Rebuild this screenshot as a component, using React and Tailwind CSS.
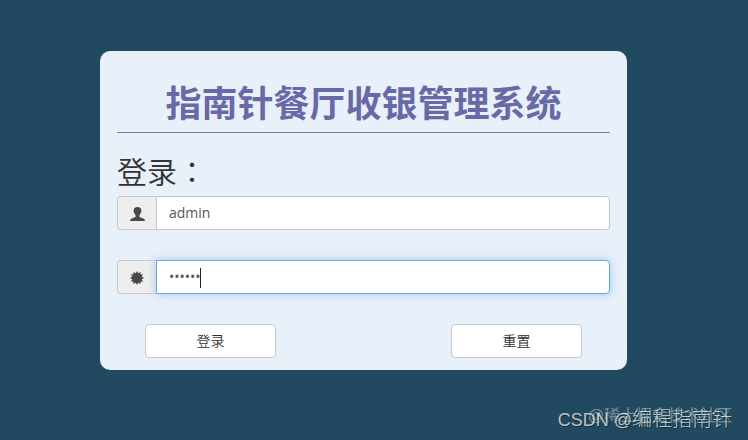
import { useState } from 'react'

function UserIcon() {
  return (
    <svg width="15" height="14" viewBox="0 0 15 14" fill="currentColor" aria-hidden="true">
      <path d="M7.500 0C5 0 3.700 1.400 3.700 3.500c0 .5 0 .7-.2 1 .1.900.5 1.300.9 1.500.2 1.100.7 1.900 1.300 2.400v1.200c-.4 1-3.300 1.300-4.700 2.400C.3 12.500 0 13.200 0 14h15c0-.8-.3-1.500-.9-2-1.400-1.100-4.400-1.400-4.800-2.400V8.400c.6-.5 1.100-1.300 1.300-2.400.4-.2.8-.6.9-1.500-.2-.3-.2-.5-.2-1C11.300 1.400 10 0 7.500 0z" />
    </svg>
  )
}

function BurstIcon() {
  return (
    <svg width="14" height="14" viewBox="0 0 14 14" fill="currentColor" aria-hidden="true">
      <path d="M7 0l1.200 2.300L10.500.9l.1 2.500 2.500-.1-1.400 2.300L14 7l-2.300 1.400 1.400 2.300-2.500-.1-.1 2.500-2.300-1.400L7 14l-1.200-2.300-2.300 1.400-.1-2.500-2.500.1 1.400-2.300L0 7l2.300-1.400L.9 3.300l2.500.1.1-2.500 2.300 1.400z" />
    </svg>
  )
}

export default function App() {
  const [form, setForm] = useState({ username: 'admin', password: '123456' })

  const handleSubmit = (e) => {
    e.preventDefault()
  }

  return (
    <div className="relative min-h-screen bg-[#21495f] pt-[51px] pr-[121px] pb-[70px] pl-[100px] font-['Open_Sans','Noto_Sans_CJK_SC',sans-serif] text-sm text-[#333]">
      <main className="rounded-[10px] bg-[#e8f0fa] px-[17px] pt-[30px] pb-3">
        <h1 className="border-b border-[#74809a] pb-1.5 text-center text-4xl leading-[45px] font-bold text-[#6a69a7]">指南针餐厅收银管理系统</h1>
        <form onSubmit={handleSubmit}>
          <h2 className="flex pt-5 pb-2 font-['Noto_Sans_CJK_SC',sans-serif] text-3xl leading-[35px] font-[350]">
            登录<span className="font-['Noto_Sans_CJK_TC',sans-serif]" lang="zh-TW">：</span>
          </h2>
          <div className="flex h-[34px]">
            <label htmlFor="username" className="flex w-[39px] items-center justify-center rounded-l border border-r-0 border-[#ccc] bg-[#eee] pt-0.5 text-[#484848]">
              <UserIcon />
            </label>
            <input
              id="username"
              type="text"
              aria-label="用户名"
              className="min-w-0 flex-1 rounded-r border border-[#c3c6cc] bg-white px-3 text-[#555] outline-none"
              value={form.username}
              onChange={e => setForm({ ...form, username: e.target.value })}
            />
          </div>
          <div className="relative mt-[30px] flex h-[34px]">
            <label htmlFor="password" className="flex w-[39px] items-center justify-center rounded-l border border-r-0 border-[#ccc] bg-[#eee] pt-0.5 text-[#484848]">
              <BurstIcon />
            </label>
            <input
              id="password"
              type="password"
              aria-label="密码"
              className="min-w-0 flex-1 rounded-r border border-[#66a8e0] bg-white px-3 text-[#555] caret-transparent shadow-[0_0_8px_rgba(102,175,233,0.6)] outline-none"
              value={form.password}
              onChange={e => setForm({ ...form, password: e.target.value })}
            />
            <span className="absolute top-2 left-[83px] h-5 w-px bg-[#222]" />
          </div>
          <div className="mt-[30px] flex justify-between px-7">
            <button type="submit" className="h-[34px] w-[131px] rounded border border-[#c6c8d0] bg-white font-[350]">登录</button>
            <button type="reset" onClick={() => setForm({ username: '', password: '' })} className="h-[34px] w-[131px] rounded border border-[#c6c8d0] bg-white font-[350]">重置</button>
          </div>
        </form>
      </main>
      <span className="absolute right-4 bottom-3 font-['Liberation_Sans','Noto_Sans_CJK_SC',sans-serif] text-base leading-6 text-white/40">@稀土掘金技术社区</span>
      <span className="absolute right-4 bottom-2 font-['Liberation_Sans','Noto_Sans_CJK_SC',sans-serif] text-xl leading-6 font-light text-white/70 [text-shadow:1px_1px_1px_rgba(0,0,0,0.4)]">
        <span className="text-lg leading-6">CSDN @</span>编程指南针
      </span>
    </div>
  )
}
